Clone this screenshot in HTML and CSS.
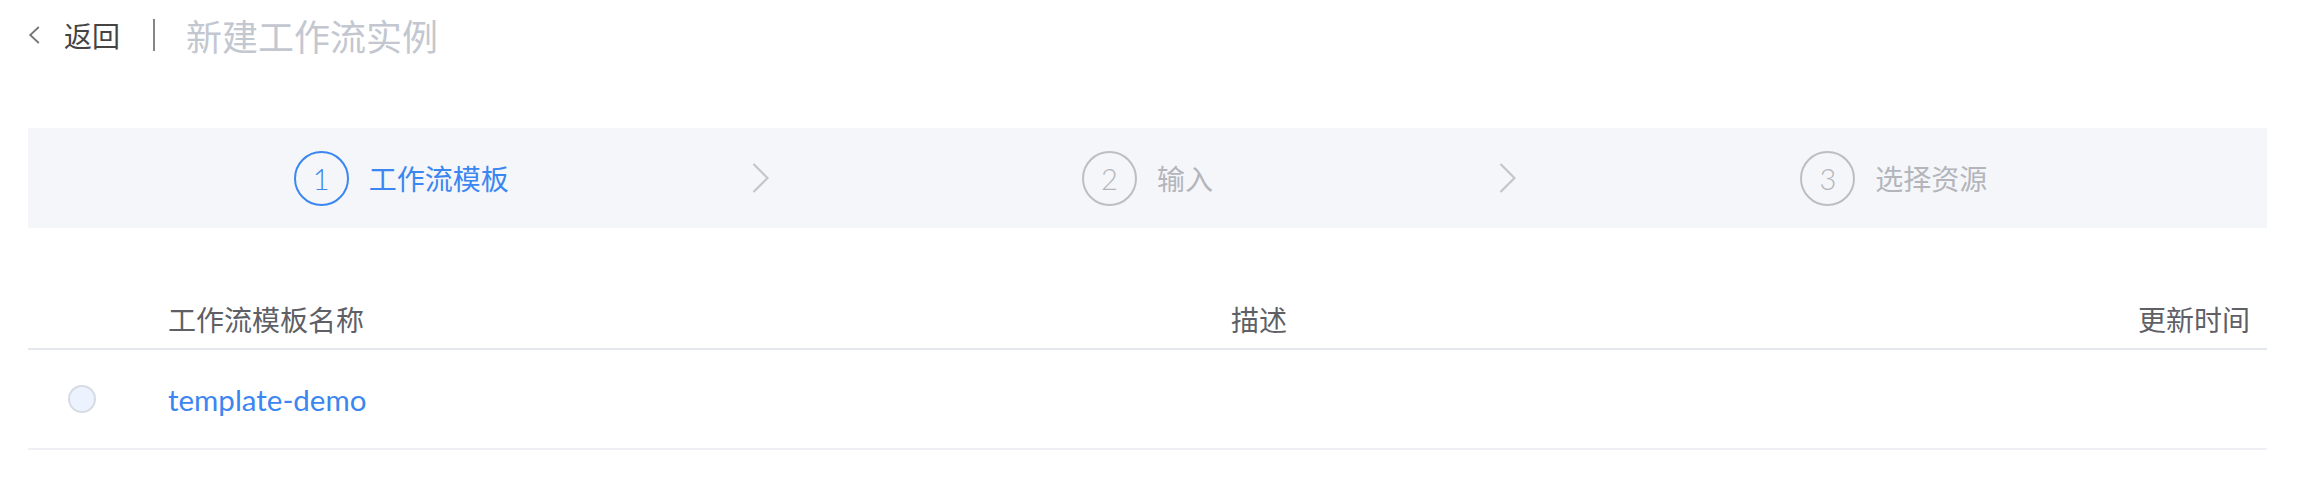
FILE: index.html
```html
<!DOCTYPE html>
<html lang="zh-CN">
<head>
<meta charset="utf-8">
<title>新建工作流实例</title>
<link rel="stylesheet" href="styles.css">
</head>
<body>
<div class="page">
  <header class="topbar">
    <a class="back" href="#">
      <svg class="back-icon" width="12" height="18" viewBox="0 0 12 18"><path d="M10.8 1 L2.2 9 L10.8 17" fill="none" stroke="#767676" stroke-width="1.8"/></svg>
      <span class="back-text">返回</span>
    </a>
    <span class="divider"></span>
    <h1 class="title">新建工作流实例</h1>
  </header>

  <div class="steps">
    <div class="step active">
      <div class="step-body"><span class="step-num">1</span><span class="step-label">工作流模板</span></div>
      <svg class="step-arrow" width="17" height="30" viewBox="0 0 17 30"><path d="M1.5 1 L15.5 15 L1.5 29" fill="none" stroke="#c2c5cc" stroke-width="2.2"/></svg>
    </div>
    <div class="step">
      <div class="step-body"><span class="step-num">2</span><span class="step-label">输入</span></div>
      <svg class="step-arrow" width="17" height="30" viewBox="0 0 17 30"><path d="M1.5 1 L15.5 15 L1.5 29" fill="none" stroke="#c2c5cc" stroke-width="2.2"/></svg>
    </div>
    <div class="step">
      <div class="step-body"><span class="step-num">3</span><span class="step-label">选择资源</span></div>
    </div>
  </div>

  <div class="table">
    <div class="row head">
      <div class="cell sel"></div>
      <div class="cell">工作流模板名称</div>
      <div class="cell">描述</div>
      <div class="cell time">更新时间</div>
    </div>
    <div class="row body">
      <div class="cell sel"><span class="radio"></span></div>
      <div class="cell"><a class="link" href="#">template-demo</a></div>
      <div class="cell"></div>
      <div class="cell time"></div>
    </div>
  </div>
</div>
</body>
</html>
```

FILE: styles.css
```css
html, body {
  margin: 0;
  padding: 0;
  background: #ffffff;
}
body {
  font-family: "Lato", "Noto Sans CJK SC", sans-serif;
  color: #333;
}
.page {
  padding: 0 43px 0 28px;
}
.topbar {
  height: 70px;
  display: flex;
  align-items: center;
}
.back {
  display: flex;
  align-items: center;
  text-decoration: none;
  color: #333;
}
.back-icon {
  display: block;
}
.back-text {
  margin-left: 24px;
  font-size: 28px;
  line-height: 40px;
  font-family: "Noto Sans CJK SC", sans-serif;
  color: #444;
}
.divider {
  width: 2px;
  height: 32px;
  margin: 0 31px 0 33px;
  background: #85868a;
}
.title {
  margin: 0;
  font-size: 36px;
  font-weight: 400;
  line-height: 48px;
  font-family: "Noto Sans CJK SC", sans-serif;
  color: #c3c7d0;
}
.steps {
  margin-top: 58px;
  height: 100px;
  background: #f5f6fa;
  display: flex;
}
.step {
  flex: 1;
  display: grid;
  grid-template-columns: 1fr auto 1fr;
  align-items: center;
}
.step-body {
  grid-column: 2;
  display: flex;
  align-items: center;
  color: #b3b5ba;
}
.step-num {
  width: 51px;
  height: 51px;
  border: 2px solid #bcbec3;
  border-radius: 50%;
  display: flex;
  align-items: center;
  justify-content: center;
  font-size: 29px;
  font-weight: 300;
  line-height: 1;
  color: #b3b5ba;
}
.step-label {
  margin-left: 20px;
  font-size: 28px;
  font-family: "Noto Sans CJK SC", sans-serif;
}
.step.active .step-body,
.step.active .step-num {
  color: #3b86f0;
  border-color: #3b86f0;
}
.step-arrow {
  grid-column: 3;
  justify-self: end;
  margin-right: 5px;
  display: block;
}
.table {
  margin-top: 62px;
}
.row {
  display: grid;
  grid-template-columns: 120px 1063px 1fr 400px;
  align-items: center;
}
.row.head {
  height: 58px;
  border-bottom: 2px solid #e4e7ed;
  font-size: 28px;
  font-family: "Noto Sans CJK SC", sans-serif;
  color: #5e6066;
}
.row.body {
  height: 98px;
  border-bottom: 2px solid #eef0f5;
}
.cell {
  padding: 0 20px;
}
.cell.sel {
  padding: 0 0 0 40px;
  display: flex;
  align-items: center;
}
.cell.time {
  text-align: right;
  padding-right: 17px;
}
.radio {
  display: block;
  width: 24px;
  height: 24px;
  border: 2px solid #d7dbe3;
  border-radius: 50%;
  background: #edf3fe;
}
.link {
  font-size: 29.5px;
  color: #3b86f0;
  text-decoration: none;
}
```
